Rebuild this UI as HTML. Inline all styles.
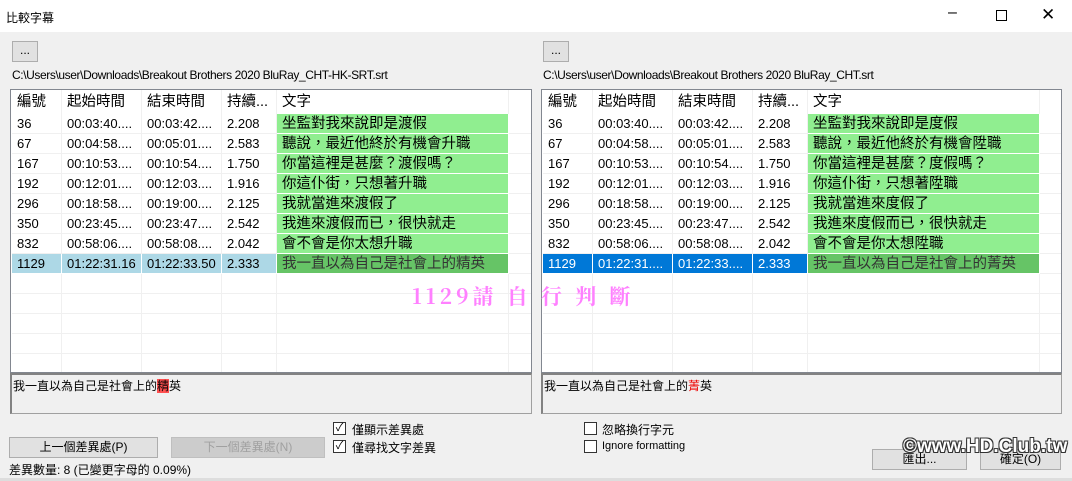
<!DOCTYPE html>
<html><head><meta charset="utf-8"><style>
*{box-sizing:border-box;margin:0;padding:0}
body{width:1072px;height:481px;background:#f0f0f0;font-family:"Liberation Sans","Noto Sans CJK TC",sans-serif;font-size:12px;color:#000;position:relative;overflow:hidden}
.a{position:absolute;white-space:nowrap}
.title{left:0;top:0;width:1072px;height:32px;background:#fff}
.btn{position:absolute;background:#e1e1e1;border:1px solid #adadad;text-align:center;font-size:12px}
.list{position:absolute;background:#fff;border:1px solid #828790;overflow:hidden}
.row{position:absolute;left:0;height:20px;font-size:13px;line-height:20px}
.c{position:absolute;top:0;height:20px;padding-left:5px;overflow:hidden;border-right:1px solid #f0f0f0;border-bottom:1px solid #f0f0f0;white-space:nowrap}
.t{font-size:14.5px}
.tb{position:absolute;background:#f0f0f0;border:1px solid #a0a0a0;border-top:2px solid #828282;border-left:2px solid #828282;font-size:12px;padding:2px 1px}
.cb{position:absolute;width:13px;height:13px;border:1px solid #333;background:#fff;font-size:11px;line-height:11px;text-align:center}
</style></head><body>
<div class="a title"></div>
<div class="a" style="left:6px;top:9px;font-size:12px">比較字幕</div>
<div class="a" style="left:948px;top:4px;font-size:16px">&#8211;</div>
<div class="a" style="left:996px;top:10px;width:11px;height:11px;border:1px solid #000"></div>
<div class="a" style="left:1041px;top:5px;font-size:17px">&#x2715;</div>
<div class="btn" style="left:12px;top:41px;width:26px;height:21px;line-height:17px">...</div>
<div class="btn" style="left:543px;top:41px;width:26px;height:21px;line-height:17px">...</div>
<div class="a" style="left:12px;top:68px;letter-spacing:-0.4px">C:\Users\user\Downloads\Breakout Brothers 2020 BluRay_CHT-HK-SRT.srt</div>
<div class="a" style="left:543px;top:68px;letter-spacing:-0.4px">C:\Users\user\Downloads\Breakout Brothers 2020 BluRay_CHT.srt</div>

<div class="list" style="left:10px;top:89px;width:522px;height:284px" id="L"></div>
<div class="list" style="left:541px;top:89px;width:521px;height:284px" id="R"></div>

<div class="tb" style="left:10px;top:373px;width:522px;height:41px">我一直以為自己是社會上的<span style="background:#ff5050">精</span>英</div>
<div class="tb" style="left:541px;top:373px;width:521px;height:41px">我一直以為自己是社會上的<span style="color:#e00">菁</span>英</div>

<div class="btn" style="left:9px;top:437px;width:149px;height:21px;line-height:19px">上一個差異處(P)</div>
<div class="btn" style="left:171px;top:437px;width:154px;height:21px;line-height:19px;color:#a0a0a0;background:#ccc;border-color:#bfbfbf">下一個差異處(N)</div>
<div class="cb" style="left:333px;top:422px">✓</div><div class="a" style="left:352px;top:421px">僅顯示差異處</div>
<div class="cb" style="left:333px;top:440px">✓</div><div class="a" style="left:352px;top:439px">僅尋找文字差異</div>
<div class="cb" style="left:584px;top:422px"></div><div class="a" style="left:602px;top:421px">忽略換行字元</div>
<div class="cb" style="left:584px;top:440px"></div><div class="a" style="left:602px;top:440px;font-size:11px">Ignore formatting</div>
<div class="btn" style="left:872px;top:449px;width:95px;height:21px;line-height:19px">匯出...</div>
<div class="btn" style="left:980px;top:449px;width:81px;height:21px;line-height:19px">確定(O)</div>
<div class="a" style="left:903px;top:436px;font-size:19px;font-weight:bold;color:#fff;text-shadow:-1px -1px 0 #333,1px -1px 0 #333,-1px 1px 0 #333,1px 1px 0 #333">©www.HD.Club.tw</div>
<div class="a" style="left:9px;top:461px">差異數量: 8 (已變更字母的 0.09%)</div>
<div class="a" style="left:412px;top:281px;font-size:21px;font-weight:bold;color:#ff80ff;font-family:'Noto Serif CJK SC',serif;letter-spacing:4px">1129請 自 行 判 斷</div>
<div class="a" style="left:0;top:478px;width:1072px;height:3px;background:#ddd"></div>

<script>
const rows=[["36","00:03:40....","00:03:42....","2.208","坐監對我來說即是渡假","坐監對我來說即是度假"],
["67","00:04:58....","00:05:01....","2.583","聽說，最近他終於有機會升職","聽說，最近他終於有機會陞職"],
["167","00:10:53....","00:10:54....","1.750","你當這裡是甚麼？渡假嗎？","你當這裡是甚麼？度假嗎？"],
["192","00:12:01....","00:12:03....","1.916","你這仆街，只想著升職","你這仆街，只想著陞職"],
["296","00:18:58....","00:19:00....","2.125","我就當進來渡假了","我就當進來度假了"],
["350","00:23:45....","00:23:47....","2.542","我進來渡假而已，很快就走","我進來度假而已，很快就走"],
["832","00:58:06....","00:58:08....","2.042","會不會是你太想升職","會不會是你太想陞職"]];
function build(id,cols,right){
 const el=document.getElementById(id);let h='';
 const hd=["編號","起始時間","結束時間","持續...","文字",""];
 h+='<div class="row" style="top:0;height:24px">';
 cols.forEach((c,i)=>{h+=`<div class="c t" style="left:${c[0]}px;width:${c[1]}px;height:24px;line-height:24px;border-bottom:none">${hd[i]}</div>`});
 h+='</div>';
 for(let r=0;r<13;r++){
  const y=24+r*20;h+=`<div class="row" style="top:${y}px">`;
  cols.forEach((c,i)=>{
   let t='',st='';
   if(r<7){t=i<4?rows[r][i]:(i==4?rows[r][right?5:4]:'');if(i==4)st='background:#90ee90;border-color:#fff';}
   else if(r==7){
     if(i<4){t=right?["1129","01:22:31....","01:22:33....","2.333"][i]:["1129","01:22:31.16","01:22:33.50","2.333"][i];
       st=right?'background:#0078d7;color:#fff;border-color:#fff':'background:#add8e6;border-color:#fff';}
     if(i==4){t=right?"我一直以為自己是社會上的菁英":"我一直以為自己是社會上的精英";st='background:#66c466;color:#333;border-color:#fff';}
   }
   h+=`<div class="c${i==4?' t':''}" style="left:${c[0]}px;width:${c[1]}px;${st}">${t}</div>`;
  });
  h+='</div>';
 }
 el.innerHTML=h;
}
build('L',[[1,50],[51,80],[131,80],[211,55],[266,232],[498,30]],false);
build('R',[[1,50],[51,80],[131,80],[211,55],[266,232],[498,30]],true);
</script>
</body></html>
